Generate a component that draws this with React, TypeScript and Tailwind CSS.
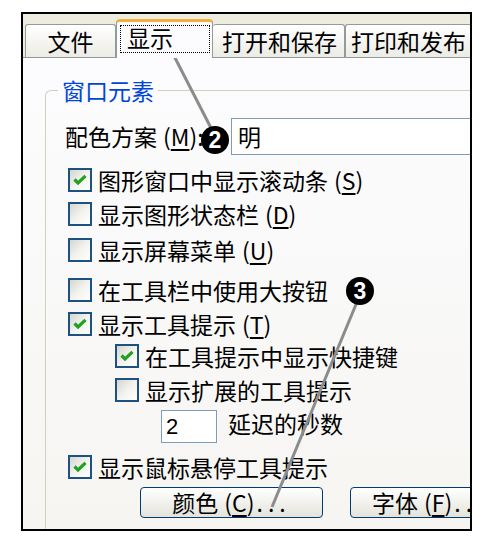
import React from "react";

function Box({ checked }: { checked?: boolean }) {
  return (
    <div className="w-[24px] h-[24px] shrink-0 border-2 border-[#1c5180] bg-linear-to-br from-[#d6d6cf] via-[#f2f2ee] to-white flex items-center justify-center">
      {checked && (
        <svg width="14" height="12" viewBox="0 0 14 12">
          <path d="M1.5 5.5 L5 9 L12.5 1.8" stroke="#21a121" strokeWidth="3.2" fill="none" />
        </svg>
      )}
    </div>
  );
}

function Acc({ k }: { k: string }) {
  return (
    <span className="ml-[6px]">
      (<span className="underline underline-offset-[3px]">{k}</span>)
    </span>
  );
}

function Row({
  checked,
  mt,
  indent,
  children,
}: {
  checked?: boolean;
  mt: string;
  indent?: boolean;
  children: React.ReactNode;
}) {
  return (
    <div className={`flex items-center h-[24px] ${mt} ${indent ? "ml-[69px]" : "ml-[22px]"}`}>
      <Box checked={checked} />
      <span className="ml-[6px] text-[23px] leading-none whitespace-nowrap">{children}</span>
    </div>
  );
}

export default function App() {
  return (
    <div className="relative w-[491px] h-[540px] bg-white overflow-hidden text-black font-['Noto_Sans_CJK_SC','Noto_Sans',sans-serif]">
      <div className="ml-[21px] mt-[12px] w-[451px] h-[519px] border-2 border-black overflow-hidden flex flex-col">
        {/* tab strip */}
        <div className="h-[44px] shrink-0 bg-[#eeecdf] border-b border-[#919b9c] flex items-end pl-[2px]">
          <div className="w-[91px] h-[33px] shrink-0 border-t border-l border-r border-[#919b9c] rounded-t-[3px] bg-linear-to-b from-white to-[#ecebe4] flex items-center justify-center text-[23px] leading-none">
            文件
          </div>
          <div className="relative z-10 w-[97px] h-[39px] -mb-px shrink-0 border-t-[3px] border-t-[#f2ae3f] border-l border-r border-[#919b9c] rounded-t-[4px] bg-[#fcfcfe]">
            <div className="ml-[3px] mt-[3px] w-[90px] h-[28px] border border-dotted border-black pl-[6px] text-[23px] leading-[22px]">
              显示
            </div>
          </div>
          <div className="w-[132px] h-[33px] shrink-0 border-t border-r border-[#919b9c] rounded-t-[3px] bg-linear-to-b from-white to-[#ecebe4] flex items-center pl-[9px] text-[23px] leading-none whitespace-nowrap">
            打开和保存
          </div>
          <div className="w-[140px] h-[33px] shrink-0 border-t border-l border-[#919b9c] rounded-t-[3px] bg-linear-to-b from-white to-[#ecebe4] flex items-center pl-[5px] text-[23px] leading-none whitespace-nowrap">
            打印和发布
          </div>
        </div>

        {/* panel */}
        <div className="flex-1 bg-linear-to-b from-[#fcfcfe] to-[#f5f4f0]">
          <fieldset className="ml-[22px] mt-[20px] w-[600px] h-[520px] min-w-0 p-0 border-t border-l border-[#d0d0bf] rounded-tl-[6px]">
            <legend className="ml-[12px] px-[4px] text-[#0046d5] text-[23px] leading-[24px]">窗口元素</legend>

            <div className="flex items-center h-[37px] mt-[16px]">
              <span className="ml-[19px] w-[166px] shrink-0 text-[23px] leading-none whitespace-nowrap">
                配色方案<Acc k="M" />:
              </span>
              <div className="flex-1 h-[37px] border border-[#7f9db9] bg-white flex items-center pl-[6px] text-[23px] leading-none">
                明
              </div>
            </div>

            <Row checked mt="mt-[13px]">
              图形窗口中显示滚动条<Acc k="S" />
            </Row>
            <Row mt="mt-[10px]">
              显示图形状态栏<Acc k="D" />
            </Row>
            <Row mt="mt-[12px]">
              显示屏幕菜单<Acc k="U" />
            </Row>
            <Row mt="mt-[16px]">在工具栏中使用大按钮</Row>
            <Row checked mt="mt-[10px]">
              显示工具提示<Acc k="T" />
            </Row>
            <Row checked indent mt="mt-[8px]">
              在工具提示中显示快捷键
            </Row>
            <Row indent mt="mt-[10px]">
              显示扩展的工具提示
            </Row>

            <div className="flex items-center h-[33px] mt-[8px] ml-[115px]">
              <div className="w-[56px] h-[33px] shrink-0 border border-[#7f9db9] bg-white flex items-center pl-[4px] text-[22px] leading-none font-['Liberation_Sans',sans-serif]">
                2
              </div>
              <span className="ml-[11px] mb-[7px] text-[23px] leading-none whitespace-nowrap">延迟的秒数</span>
            </div>

            <Row checked mt="mt-[12px]">
              显示鼠标悬停工具提示
            </Row>

            <div className="flex items-center h-[31px] mt-[8px] ml-[94px]">
              <div className="w-[183px] h-[31px] shrink-0 rounded-[4px] border border-[#003c74] bg-linear-to-b from-white to-[#e4e3da] flex items-center justify-center text-[23px] leading-none whitespace-nowrap">
                颜色<Acc k="C" /><span className="ml-[2px] tracking-[5px]">...</span>
              </div>
              <div className="ml-[27px] w-[183px] h-[31px] shrink-0 rounded-[4px] border border-[#003c74] bg-linear-to-b from-white to-[#e4e3da] flex items-center pl-[21px] text-[23px] leading-none whitespace-nowrap">
                字体<Acc k="F" /><span className="ml-[2px] tracking-[5px]">...</span>
              </div>
            </div>
          </fieldset>
        </div>
      </div>

      {/* annotation lines */}
      <svg className="absolute left-0 top-0 pointer-events-none" width="491" height="540">
        <line x1="172" y1="52" x2="211" y2="128" stroke="#8c8c8c" strokeWidth="3" />
        <line x1="357" y1="302" x2="272" y2="507" stroke="#8c8c8c" strokeWidth="3" />
      </svg>
      <div className="absolute left-[201px] top-[126px] w-[28px] h-[28px] rounded-full bg-black text-white flex items-center justify-center text-[23px] font-bold leading-none font-['Liberation_Sans',sans-serif]">
        2
      </div>
      <div className="absolute left-[346px] top-[277px] w-[28px] h-[28px] rounded-full bg-black text-white flex items-center justify-center text-[23px] font-bold leading-none font-['Liberation_Sans',sans-serif]">
        3
      </div>
    </div>
  );
}
